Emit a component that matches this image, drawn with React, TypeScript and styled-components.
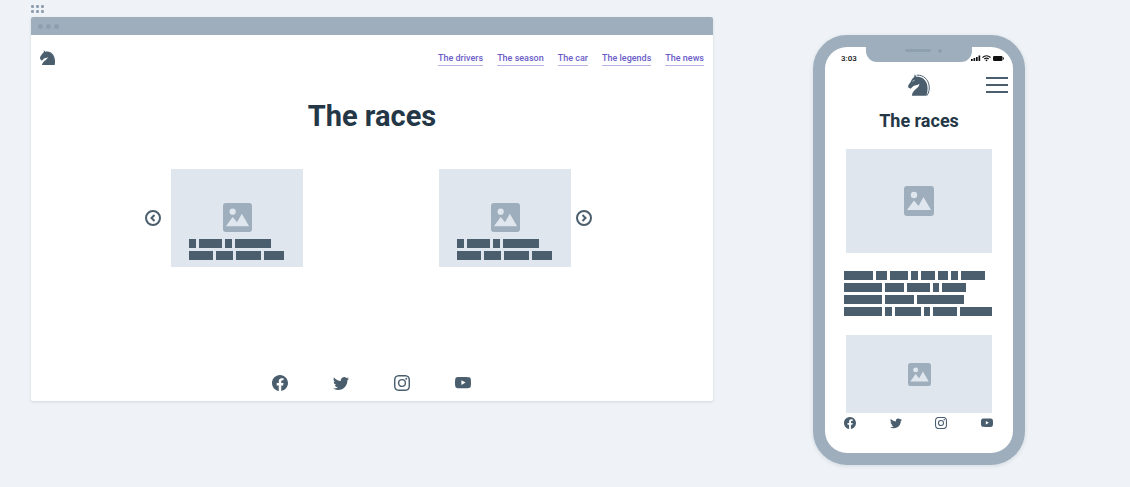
import React from "react";
import styled, { createGlobalStyle } from "styled-components";
import { BsFacebook, BsTwitter, BsInstagram, BsYoutube } from "react-icons/bs";

const slate = "#4a5e6e";
const frame = "#9eaebc";
const ink = "#243746";

const GlobalStyle = createGlobalStyle`
  *, *::before, *::after { box-sizing: border-box; }
  body {
    margin: 0;
    background: #eff3f7;
    color: ${ink};
    font-family: Roboto, "Liberation Sans", sans-serif;
  }
  h1, h2, ul { margin: 0; padding: 0; }
  ul { list-style: none; }
  button { padding: 0; border: 0; background: none; color: inherit; cursor: pointer; }
  svg { display: block; }
`;

const Board = styled.main`
  display: flex;
  align-items: flex-start;
  gap: 100px;
  padding: 5px 105px 22px 31px;
`;

const DesktopArtboard = styled.section`
  flex: 1;
  min-width: 0;
`;

const DragHandle = styled.div`
  display: grid;
  grid-template-columns: repeat(3, 3px);
  grid-auto-rows: 3px;
  gap: 2px;
  margin-bottom: 4px;

  span { background: #91a0b0; border-radius: 1px; }
`;

const Browser = styled.div`
  background: #fff;
  border-radius: 2px;
  box-shadow: 0 1px 3px rgba(60, 80, 110, 0.16);
  overflow: hidden;
`;

const TitleBar = styled.div`
  display: flex;
  align-items: center;
  gap: 3px;
  height: 18px;
  padding-left: 7px;
  background: ${frame};

  span { width: 5px; height: 5px; border-radius: 50%; background: #909fb0; }
`;

const SiteHeader = styled.header`
  display: flex;
  align-items: flex-start;
  justify-content: space-between;
  padding: 15px 9px 0;
`;

const NavList = styled.ul`
  display: flex;
  gap: 14px;
`;

const NavLink = styled.a`
  display: block;
  border-bottom: 1px solid #b9b2e2;
  color: #6c5dc8;
  font-size: 9px;
  font-weight: 500;
  line-height: 14px;
  padding-top: 1px;
  margin-bottom: -1px;
  text-decoration: none;
  white-space: nowrap;
`;

const PageTitle = styled.h1`
  margin: 33px 0 35px;
  font-size: 29px;
  line-height: 36px;
  text-align: center;
`;

const Carousel = styled.div`
  display: flex;
  align-items: center;
  justify-content: center;
  padding-right: 7px;
`;

const Slides = styled.div`
  display: flex;
  gap: 136px;
  margin: 0 5px 0 10px;
`;

const ArrowButton = styled.button`
  width: 16px;
  height: 16px;
  color: ${slate};
`;

const Slide = styled.article`
  width: 132px;
  height: 98px;
  padding: 34px 18px 0;
  background: #dfe6ee;
`;

const SlideIcon = styled.div`
  display: flex;
  justify-content: center;
  margin-bottom: 7px;
`;

const BarBlock = styled.div`
  display: grid;
  gap: 3px;
`;

const BarRow = styled.div`
  display: flex;
  gap: 3px;
`;

const Bar = styled.span<{ $w: number }>`
  flex: none;
  width: ${({ $w }) => $w}px;
  height: 9px;
  background: ${slate};
`;

const SocialList = styled.ul<{ $compact?: boolean }>`
  display: flex;
  justify-content: ${({ $compact }) => ($compact ? "space-between" : "center")};
  gap: ${({ $compact }) => ($compact ? "0" : "45px")};
  padding: ${({ $compact }) => ($compact ? "4px 20px 24px 19px" : "108px 2px 10px 0")};

  a { display: block; color: ${slate}; }
`;

const Phone = styled.section`
  flex: none;
  position: relative;
  width: 212px;
  margin-top: 30px;
  border: 12px solid ${frame};
  border-radius: 34px;
  background: ${frame};
  box-shadow: 0 1px 4px rgba(60, 80, 110, 0.16);
`;

const Screen = styled.div`
  border-radius: 22px;
  background: #fff;
`;

const Notch = styled.div`
  position: absolute;
  top: 0;
  left: 41px;
  right: 41px;
  display: flex;
  justify-content: center;
  gap: 7px;
  height: 15px;
  padding: 2px 0 0 8px;
  border-radius: 0 0 11px 11px;
  background: ${frame};

  span { height: 3px; border-radius: 2px; background: #8e9fae; }
  span:first-child { width: 26px; }
  span:last-child { width: 4px; height: 4px; }
`;

const StatusBar = styled.div`
  display: flex;
  align-items: flex-start;
  justify-content: space-between;
  height: 27px;
  padding: 7px 9px 0 16px;
  color: #111;
  font-size: 8px;
  font-weight: 500;
  line-height: 10px;
`;

const PhoneHeader = styled.header`
  display: grid;
  grid-template-columns: 1fr auto 1fr;
  align-items: center;
  padding: 0 5px;
`;

const MenuButton = styled.button`
  grid-column: 3;
  justify-self: end;
  display: grid;
  gap: 5px;

  span { width: 22px; height: 2px; background: ${slate}; }
`;

const PhoneLogo = styled.div`
  grid-column: 2;
`;

const PhoneTitle = styled.h2`
  margin: 13px 0 16px;
  font-size: 18px;
  line-height: 24px;
  text-align: center;
`;

const Picture = styled.div<{ $h: number }>`
  display: flex;
  align-items: center;
  justify-content: center;
  height: ${({ $h }) => $h}px;
  margin: 0 21px;
  background: #dfe6ee;
`;

const Copy = styled.div`
  padding: 18px 19px 19px;
`;

function HorseSmall() {
  return (
    <svg width="15" height="15" viewBox="0 0 45 45" role="img" aria-label="Horse logo">
      <path
        fill={slate}
        d="M11 0l5 5C28 3 38 9 42 19c3 8 4 16 2 26H6c1-7 5-11 12-16 3-2 5-5 6-8-4 4-9 3-13 5l-5 6-5-4c-2-4 0-9 3-12 3-4 4-8 8-9z"
      />
      <path d="M27 7c8 3 12 9 14 17" fill="none" stroke="#7a8c9a" strokeWidth="1" />
    </svg>
  );
}

function HorseLarge() {
  return (
    <svg width="22" height="22" viewBox="0 0 68 67" role="img" aria-label="Horse logo">
      <path
        fill={slate}
        d="M21 0l5 8c15-1 27 7 32 21 4 12 3 25-1 38H12c1-11 7-17 16-24 5-4 7-8 7-13-6 5-13 5-19 7L8 45 1 41c-2-6 2-10 6-15 4-6 5-13 12-17z"
      />
      <path d="M27 3c22-1 35 14 38 31 2 12 0 22-6 32" fill="none" stroke={slate} strokeWidth="3" />
      <path d="M14 22l6-3" stroke="#fff" strokeWidth="2" />
    </svg>
  );
}

function ImageIcon({ size }: { size: number }) {
  return (
    <svg width={size} height={size} viewBox="0 0 30 30" aria-hidden="true">
      <rect width="30" height="30" rx="3" fill="#9eaebc" />
      <circle cx="10" cy="9" r="3.2" fill="#dfe6ee" />
      <path d="M3 24l7-9.500 4.500 5.500L19.500 11 27 24z" fill="#dfe6ee" />
    </svg>
  );
}

function Arrow({ direction }: { direction: "left" | "right" }) {
  const chevron = direction === "left" ? "M9.500 5L6.500 8l3 3" : "M6.500 5l3 3-3 3";
  return (
    <svg width="16" height="16" viewBox="0 0 16 16" fill="none" stroke={slate} strokeWidth="2" aria-hidden="true">
      <circle cx="8" cy="8" r="7" />
      <path d={chevron} />
    </svg>
  );
}

function StatusIcons() {
  return (
    <svg width="33" height="8" viewBox="0 0 33 8" aria-hidden="true">
      <path d="M0 5h1.700v2H0zM2.500 4h1.700v3H2.500zM5 3h1.700v4H5zM7.500 1.500h1.700V7H7.500z" fill="#111" />
      <path d="M11.500 3.500Q15.500 0 19.500 3.500M13.300 5Q15.500 3.200 17.700 5" fill="none" stroke="#111" strokeWidth="1.200" />
      <circle cx="15.500" cy="6.300" r="0.900" fill="#111" />
      <rect x="22" y="2" width="9.500" height="5" rx="1.200" fill="#111" />
      <path d="M32 3.500h0.900v2H32z" fill="#111" />
    </svg>
  );
}

function Bars({ rows }: { rows: number[][] }) {
  return (
    <BarBlock aria-hidden="true">
      {rows.map((row, r) => (
        <BarRow key={r}>
          {row.map((w, i) => (
            <Bar key={i} $w={w} />
          ))}
        </BarRow>
      ))}
    </BarBlock>
  );
}

const networks = [
  { name: "Facebook", Icon: BsFacebook },
  { name: "Twitter", Icon: BsTwitter },
  { name: "Instagram", Icon: BsInstagram },
  { name: "YouTube", Icon: BsYoutube },
];

function Social({ size, compact }: { size: number; compact?: boolean }) {
  return (
    <SocialList $compact={compact}>
      {networks.map(({ name, Icon }) => (
        <li key={name}>
          <a href="#" aria-label={name}>
            <Icon size={size} />
          </a>
        </li>
      ))}
    </SocialList>
  );
}

const links = ["The drivers", "The season", "The car", "The legends", "The news"];

const slideCopy = [
  [7, 23, 7, 36],
  [24, 17, 25, 20],
];

const phoneCopy = [
  [29, 11, 18, 7, 14, 10, 7, 24],
  [38, 19, 23, 6, 24],
  [38, 29, 47],
  [38, 7, 26, 6, 24, 32],
];

export default function App() {
  return (
    <>
      <GlobalStyle />
      <Board>
        <DesktopArtboard>
          <DragHandle aria-hidden="true">
            {[0, 1, 2, 3, 4, 5].map((i) => (
              <span key={i} />
            ))}
          </DragHandle>
          <Browser>
            <TitleBar aria-hidden="true">
              <span />
              <span />
              <span />
            </TitleBar>
            <SiteHeader>
              <HorseSmall />
              <nav>
                <NavList>
                  {links.map((label) => (
                    <li key={label}>
                      <NavLink href="#">{label}</NavLink>
                    </li>
                  ))}
                </NavList>
              </nav>
            </SiteHeader>
            <PageTitle>The races</PageTitle>
            <Carousel>
              <ArrowButton type="button" aria-label="Previous race">
                <Arrow direction="left" />
              </ArrowButton>
              <Slides>
                {[0, 1].map((i) => (
                  <Slide key={i}>
                    <SlideIcon>
                      <ImageIcon size={29} />
                    </SlideIcon>
                    <Bars rows={slideCopy} />
                  </Slide>
                ))}
              </Slides>
              <ArrowButton type="button" aria-label="Next race">
                <Arrow direction="right" />
              </ArrowButton>
            </Carousel>
            <Social size={16} />
          </Browser>
        </DesktopArtboard>

        <Phone>
          <Screen>
            <StatusBar>
              <span>3:03</span>
              <StatusIcons />
            </StatusBar>
            <PhoneHeader>
              <PhoneLogo>
                <HorseLarge />
              </PhoneLogo>
              <MenuButton type="button" aria-label="Open menu">
                <span />
                <span />
                <span />
              </MenuButton>
            </PhoneHeader>
            <PhoneTitle>The races</PhoneTitle>
            <Picture $h={104}>
              <ImageIcon size={30} />
            </Picture>
            <Copy>
              <Bars rows={phoneCopy} />
            </Copy>
            <Picture $h={78}>
              <ImageIcon size={23} />
            </Picture>
            <Social size={12} compact />
          </Screen>
          <Notch aria-hidden="true">
            <span />
            <span />
          </Notch>
        </Phone>
      </Board>
    </>
  );
}
